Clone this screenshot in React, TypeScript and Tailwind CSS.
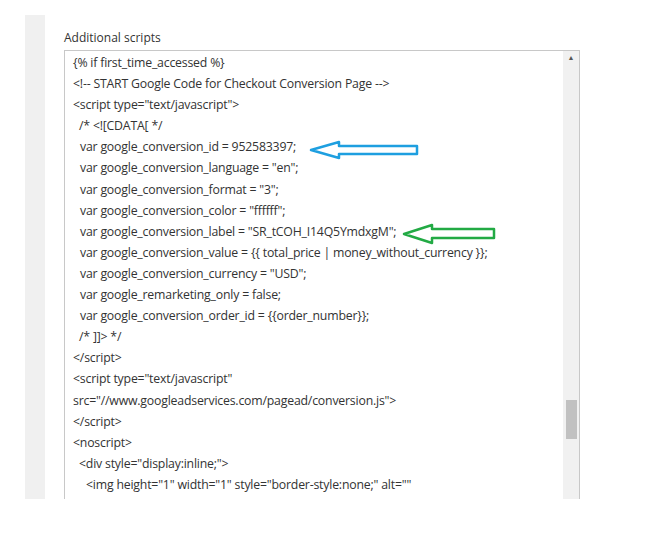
import React from "react";

const lines: [string, number][] = [
  ["{% if first_time_accessed %}", 0],
  ["<!-- START Google Code for Checkout Conversion Page -->", 0],
  ['<script type="text/javascript">', 0],
  ["/* <![CDATA[ */", 6],
  ["var google_conversion_id = 952583397;", 7],
  ['var google_conversion_language = "en";', 7],
  ['var google_conversion_format = "3";', 7],
  ['var google_conversion_color = "ffffff";', 7],
  ['var google_conversion_label = "SR_tCOH_I14Q5YmdxgM";', 7],
  ["var google_conversion_value = {{ total_price | money_without_currency }};", 7],
  ['var google_conversion_currency = "USD";', 7],
  ["var google_remarketing_only = false;", 7],
  ["var google_conversion_order_id = {{order_number}};", 7],
  ["/* ]]> */", 6],
  ["</script>", 0],
  ['<script type="text/javascript"', 0],
  ['src="//www.googleadservices.com/pagead/conversion.js">', 0],
  ["</script>", 0],
  ["<noscript>", 0],
  ['<div style="display:inline;">', 6],
  ['<img height="1" width="1" style="border-style:none;" alt=""', 13],
  ['src="//www.googleadservices.com/pagead/conversion/952583397/?label=SR_tCOH_I14Q5YmdxgM"/>', 20],
];

export default function App() {
  return (
    <div className="w-[649px] h-[539px] bg-white pt-[15px] pl-[25px]" style={{ fontFamily: '"Open Sans", "Liberation Sans", sans-serif' }}>
      <div className="flex h-[484px] overflow-hidden">
        <div className="w-[20px] bg-[#f0f0f0]" />
        <div className="flex-1 pl-[19px] pt-[15px] relative">
          <div className="text-[12px] text-[#333] leading-[16px] mb-[4px]">Additional scripts</div>
          <div className="w-[516px] h-[460px] border border-[#c8c8c8] flex relative">
            <div className="flex-1 overflow-hidden pl-[8px] pt-[1px]">
              {lines.map(([t, ind], i) => (
                <div key={i} className="text-[12.3px] tracking-[-0.2px] text-[#333] leading-[21.1px] whitespace-nowrap" style={{ paddingLeft: ind }}>
                  {t}
                </div>
              ))}
            </div>
            <div className="w-[16px] bg-[#f1f1f1] flex flex-col items-center">
              <div className="text-[7px] text-[#555] mt-[2px]">▲</div>
              <div className="w-[11px] h-[39px] bg-[#c1c1c1] mt-[336px]" />
            </div>
          </div>
          <svg className="absolute left-[264px] top-[125px]" width="112" height="20" viewBox="0 0 112 20">
            <polygon points="2,10 30,2 30,6 108,6 108,14 30,14 30,18" fill="none" stroke="#1e9fe0" strokeWidth="2.5" strokeLinejoin="round" />
          </svg>
          <svg className="absolute left-[357px] top-[208px]" width="96" height="22" viewBox="0 0 96 22">
            <polygon points="2,11 30,2 30,6 92,6 92,15 30,15 30,20" fill="none" stroke="#22aa44" strokeWidth="2.5" strokeLinejoin="round" />
          </svg>
        </div>
      </div>
    </div>
  );
}
